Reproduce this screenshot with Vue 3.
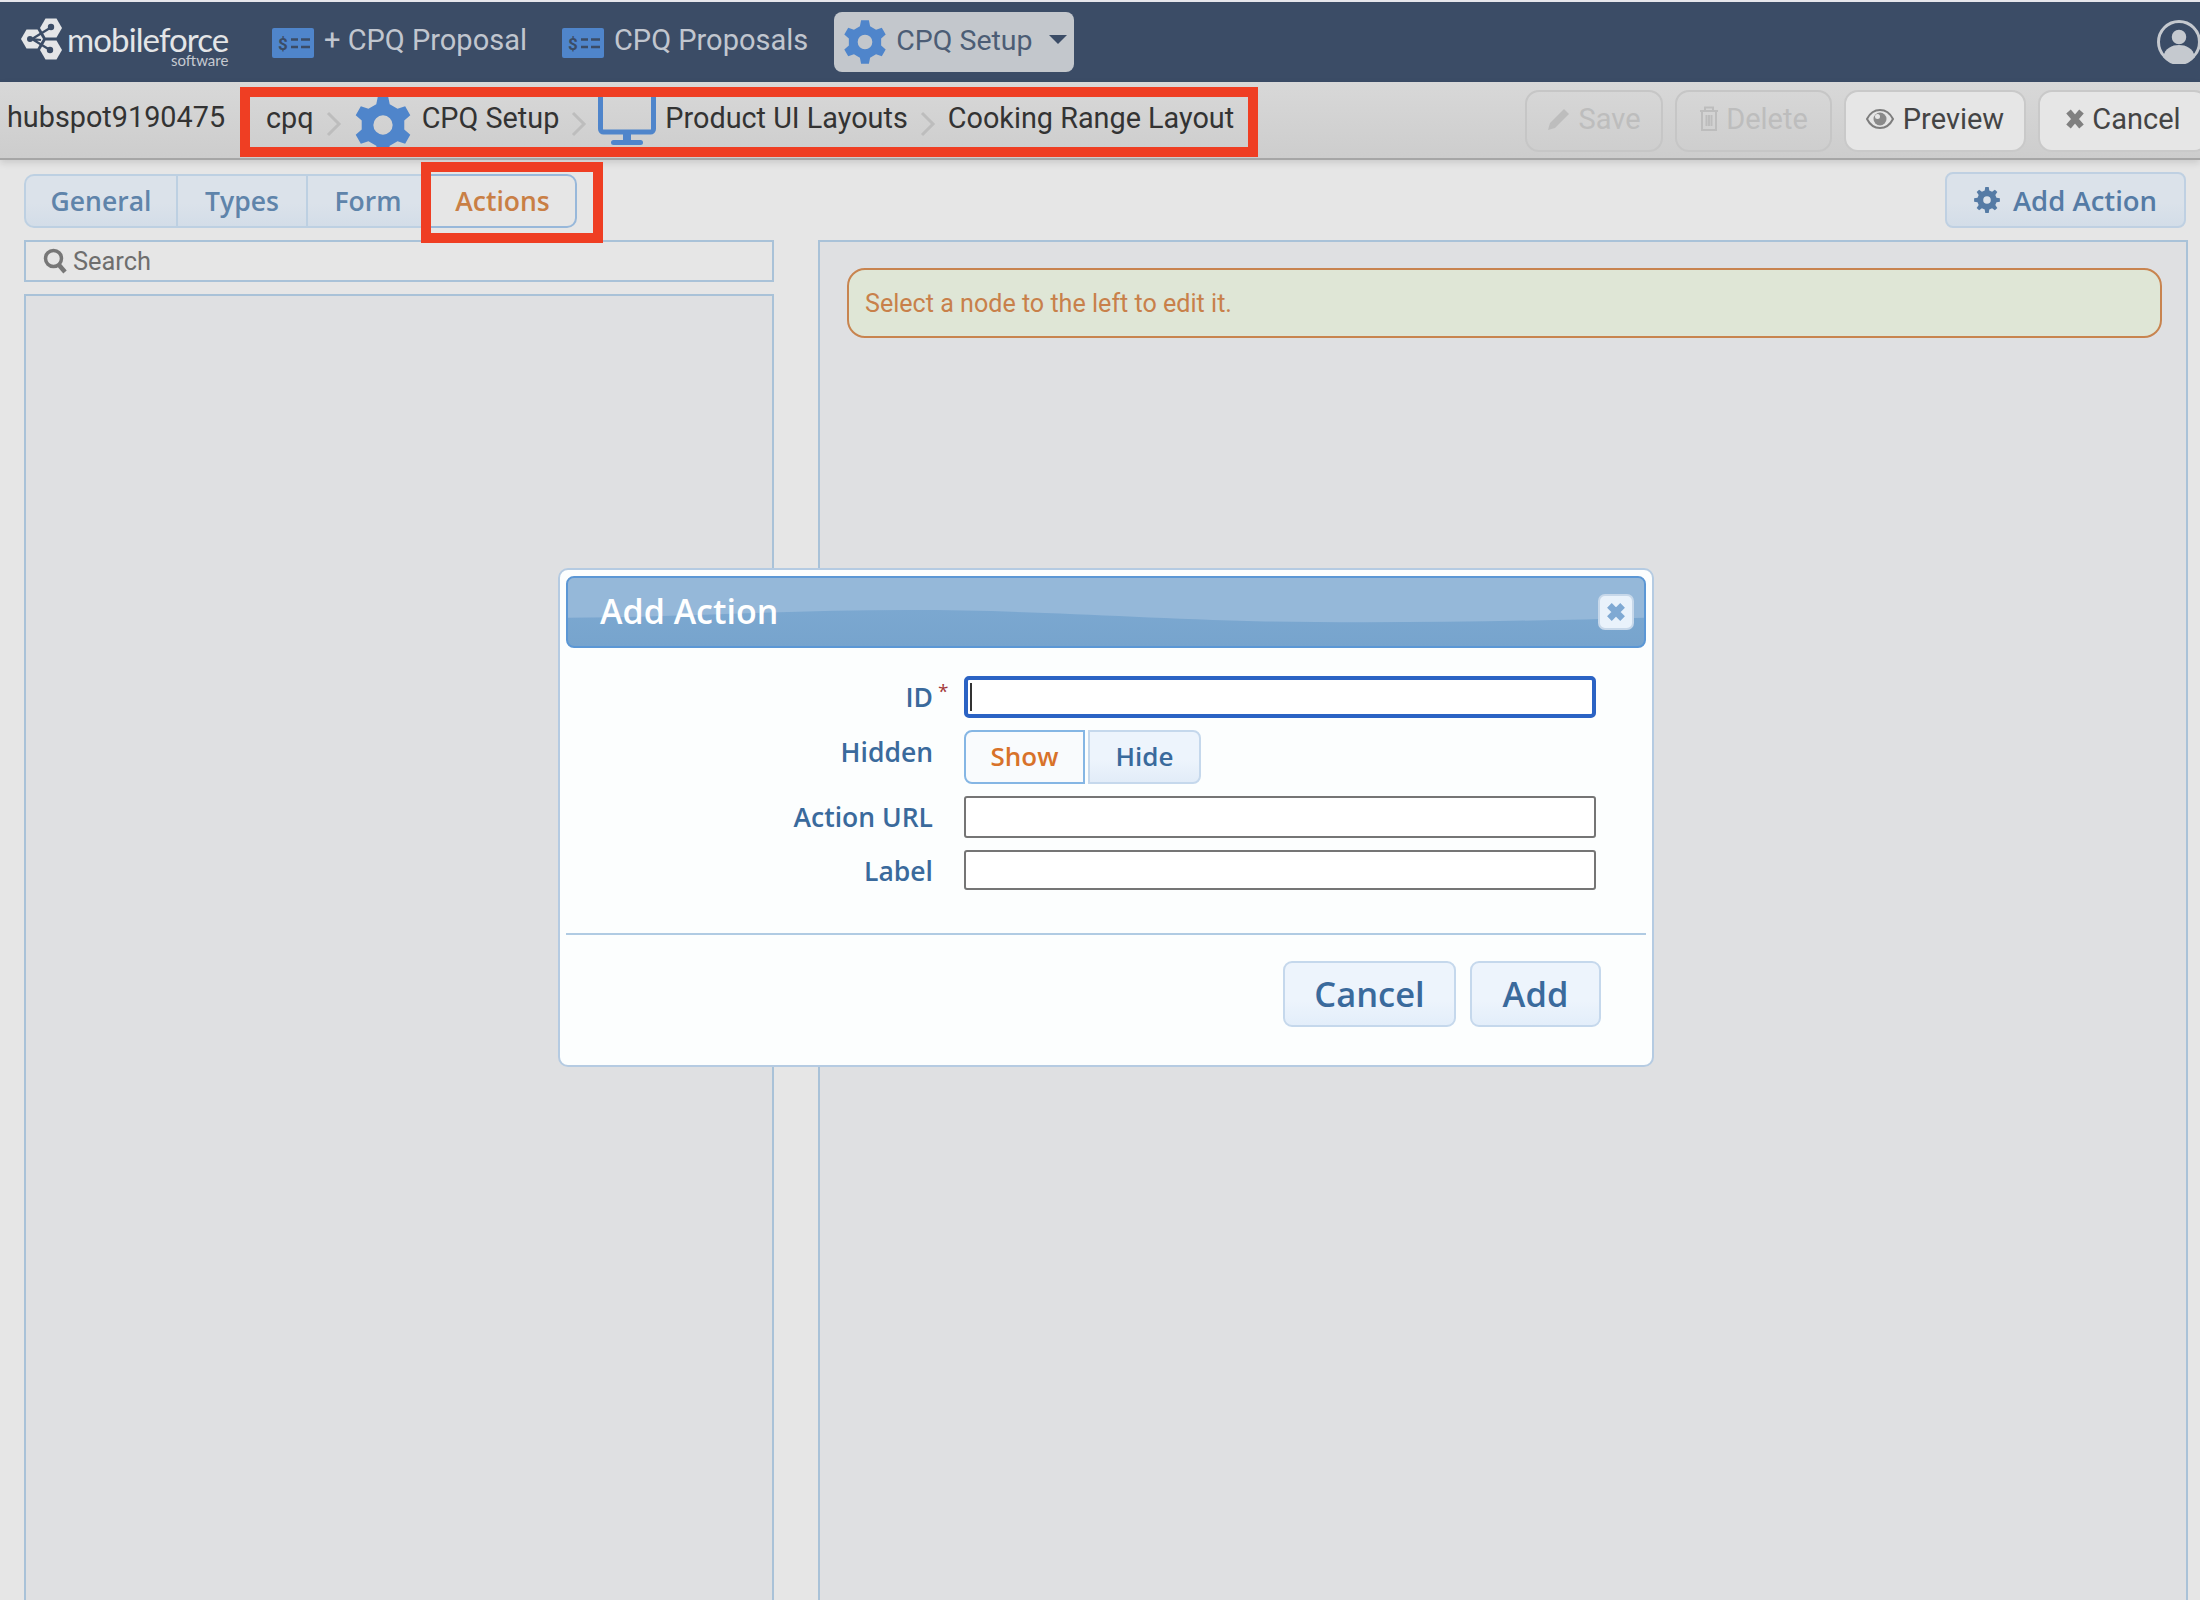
<template>
  <div class="page">
    <header class="navbar">
      <div class="logo">
        <svg class="logo-mark" width="46" height="46" viewBox="0 0 46 46">
          <polygon v-for="h in logoHexes" :key="h" :points="h" fill="#e4e5e7" />
          <path d="M11 22 L29 11 M11 22 L20 23 M11 22 L29 33" stroke="#3b4c66" stroke-width="2.2" fill="none" />
          <circle cx="30" cy="10" r="3.2" fill="#3b4c66" />
          <circle cx="29" cy="33" r="3.2" fill="#3b4c66" />
          <circle cx="9" cy="22" r="3" fill="#3b4c66" />
        </svg>
        <div class="logo-text">
          <span class="logo-name">mobileforce</span>
          <span class="logo-sub">software</span>
        </div>
      </div>
      <a v-for="item in navItems" :key="item" class="nav-item">
        <svg class="money" width="42" height="30" viewBox="0 0 42 30">
          <rect width="42" height="30" rx="2" fill="#4f85cb" />
          <text x="6" y="22" font-size="17" font-weight="700" font-family="Roboto, sans-serif" fill="#3b4c66">$</text>
          <path d="M19 11.5h7M29 11.5h9M19 19h7M29 19h9" stroke="#3b4c66" stroke-width="2.4" />
        </svg>
        {{ item }}
      </a>
      <div class="nav-active">
        <svg width="44" height="44" viewBox="0 0 48 48"><path :d="gearSix" fill="#4f85cb" fill-rule="evenodd" /></svg>
        <span>CPQ Setup</span>
        <i class="caret"></i>
      </div>
      <svg class="avatar" width="44" height="44" viewBox="0 0 44 44">
        <circle cx="22" cy="22" r="20.5" fill="#3b4c66" stroke="#c5c9cf" stroke-width="3" />
        <circle cx="22" cy="17" r="8" fill="#c5c9cf" stroke="#3b4c66" stroke-width="1.5" />
        <path d="M6 37c2-9 9-12 16-12s14 3 16 12a20 20 0 0 1-32 0z" fill="#c5c9cf" />
      </svg>
    </header>

    <div class="toolbar">
      <span class="account">hubspot9190475</span>
      <nav class="crumbs">
        <span class="crumb-first">cpq</span>
        <svg class="chev" width="16" height="26" viewBox="0 0 16 26"><path d="M2 2l11 11L2 24" /></svg>
        <svg class="crumb-gear" width="58" height="58" viewBox="0 0 48 48"><path :d="gearSix" fill="#4f85cb" fill-rule="evenodd" /></svg>
        <span>CPQ Setup</span>
        <svg class="chev" width="16" height="26" viewBox="0 0 16 26"><path d="M2 2l11 11L2 24" /></svg>
        <svg class="crumb-screen" width="58" height="50" viewBox="0 0 58 50">
          <rect x="2.5" y="-3" width="53" height="38" rx="3" fill="none" stroke="#4f85cb" stroke-width="5" />
          <path d="M25 37h8v7h-8z" fill="#4f85cb" />
          <rect x="13" y="43" width="32" height="5" rx="2.5" fill="#4f85cb" />
        </svg>
        <span>Product UI Layouts</span>
        <svg class="chev" width="16" height="26" viewBox="0 0 16 26"><path d="M2 2l11 11L2 24" /></svg>
        <span>Cooking Range Layout</span>
      </nav>
      <div class="tool-buttons">
        <button class="tool off save">
          <svg width="24" height="24" viewBox="0 0 24 24"><path d="M17 2l5 5L8 21l-7 2 2-7z" fill="#bdbdbd" /></svg>
          Save
        </button>
        <button class="tool off del">
          <svg width="20" height="26" viewBox="0 0 20 26"><path d="M6 4V1.500h8V4M1 5h18M3 5v19h14V5M7.500 9v11M10 9v11M12.500 9v11" fill="none" stroke="#bdbdbd" stroke-width="2" /></svg>
          Delete
        </button>
        <button class="tool preview">
          <svg width="28" height="22" viewBox="0 0 28 22">
            <path d="M1 11c3-6 8-9 13-9s10 3 13 9c-3 6-8 9-13 9S4 17 1 11z" fill="#e6e6e6" stroke="#7d7d7d" stroke-width="2" />
            <circle cx="14" cy="11" r="6.500" fill="#8a8a8a" />
            <circle cx="11.500" cy="8.500" r="2.500" fill="#e6e6e6" />
          </svg>
          Preview
        </button>
        <button class="tool cancel">
          <svg width="20" height="22" viewBox="0 0 20 22"><path d="M3.500 3.500l13 15M16.500 3.500l-13 15" stroke="#808080" stroke-width="6" /></svg>
          Cancel
        </button>
      </div>
    </div>

    <main class="content">
      <div class="tabs-row">
        <div class="tabs">
          <button v-for="t in tabs" :key="t" class="tab" :class="{ active: t === 'Actions' }">
            {{ t }}
            <span v-if="t === 'Actions'" class="tab-mark"></span>
          </button>
        </div>
        <button class="add-action">
          <svg width="26" height="26" viewBox="0 0 48 48"><path :d="gearEight" fill="#557ba5" fill-rule="evenodd" /></svg>
          Add Action
        </button>
      </div>
      <div class="columns">
        <div class="left">
          <div class="search">
            <svg width="24" height="26" viewBox="0 0 24 26">
              <circle cx="10.500" cy="10.500" r="8" fill="none" stroke="#777" stroke-width="3.500" />
              <path d="M16 17l6 7" stroke="#777" stroke-width="4.500" />
            </svg>
            <span>Search</span>
          </div>
          <div class="tree"></div>
        </div>
        <div class="right">
          <div class="notice">Select a node to the left to edit it.</div>
        </div>
      </div>
    </main>

    <div class="dialog">
      <div class="dlg-head">
        <svg class="wave" viewBox="0 0 1080 72" preserveAspectRatio="none">
          <path d="M0 0H1080V42C960 46 820 48 700 46C560 42 470 34 340 34C220 34 100 42 0 42Z" fill="#95b8d9" />
        </svg>
        <h2>Add Action</h2>
        <button class="dlg-close">
          <svg width="22" height="22" viewBox="0 0 20 20"><path d="M4 4l12 12M16 4L4 16" stroke="#7fa9d3" stroke-width="6" /></svg>
        </button>
      </div>
      <form class="dlg-form" @submit.prevent>
        <div class="row row-id">
          <label>ID<sup>*</sup></label>
          <div class="focus-input"><i class="cursor"></i></div>
        </div>
        <div class="row row-hidden">
          <label class="up">Hidden</label>
          <div class="toggle">
            <button class="tog on">Show</button>
            <button class="tog">Hide</button>
          </div>
        </div>
        <div class="row row-url">
          <label>Action URL</label>
          <input type="text" />
        </div>
        <div class="row row-label">
          <label>Label</label>
          <input type="text" />
        </div>
      </form>
      <div class="dlg-foot">
        <button class="dlg-btn cancel-btn">Cancel</button>
        <button class="dlg-btn add-btn">Add</button>
      </div>
    </div>
  </div>
</template>

<script setup>
const navItems = ["+ CPQ Proposal", "CPQ Proposals"];
const tabs = ["General", "Types", "Form", "Actions"];

function hex(cx, cy, r) {
  const pts = [];
  for (let i = 0; i < 6; i++) {
    const a = (Math.PI / 3) * i;
    pts.push(`${(cx + r * Math.cos(a)).toFixed(1)},${(cy + r * Math.sin(a)).toFixed(1)}`);
  }
  return pts.join(" ");
}
const logoHexes = [hex(30, 11, 11), hex(11, 22, 11), hex(30, 33, 11)];

// cog outline in a 48 box, with a round hole
function gear(teeth, outer, inner, hole, rot = 0) {
  const step = (Math.PI * 2) / teeth;
  let d = "";
  for (let i = 0; i < teeth; i++) {
    const a = i * step + rot;
    const p = [
      [inner, a - step * 0.3],
      [outer, a - step * 0.17],
      [outer, a + step * 0.17],
      [inner, a + step * 0.3],
    ];
    p.forEach(([r, t], j) => {
      const x = (24 + r * Math.sin(t)).toFixed(2);
      const y = (24 - r * Math.cos(t)).toFixed(2);
      d += `${i === 0 && j === 0 ? "M" : "L"}${x} ${y} `;
    });
  }
  d += `Z M${24 - hole} 24 a${hole} ${hole} 0 1 0 ${hole * 2} 0 a${hole} ${hole} 0 1 0 ${-hole * 2} 0 Z`;
  return d;
}
const gearSix = gear(6, 24, 18, 8);
const gearEight = gear(8, 24, 18, 7);
</script>

<style>
html,
body {
  margin: 0;
  background: #e6e6e6;
}
</style>

<style scoped>
.page {
  width: 2200px;
  height: 1600px;
  overflow: hidden;
  position: relative;
  display: flex;
  flex-direction: column;
  background: #e6e6e6;
  font-family: Roboto, "Liberation Sans", sans-serif;
  border-top: 2px solid #e6e6ec;
  box-sizing: border-box;
}
button {
  font-family: inherit;
  cursor: pointer;
}

/* top bar */
.navbar {
  height: 80px;
  flex: none;
  display: flex;
  align-items: center;
  background: #3b4c66;
  color: #c1c6cf;
  font-size: 29px;
  padding-left: 21px;
  box-sizing: border-box;
}
.logo {
  display: flex;
  align-items: flex-start;
  width: 207px;
  margin-right: 44px;
}
.logo-mark {
  flex: none;
  margin-top: -1px;
}
.logo-text {
  display: flex;
  flex-direction: column;
  align-items: flex-end;
  margin-left: 0;
  color: #e4e5e7;
}
.logo-name {
  font-family: Lato, sans-serif;
  font-size: 33px;
  line-height: 28px;
  letter-spacing: -0.9px;
  margin-top: 7px;
}
.logo-sub {
  font-family: Lato, sans-serif;
  font-size: 15px;
  line-height: 14px;
  color: #c6cad1;
}
.nav-item {
  display: flex;
  align-items: center;
  gap: 10px;
  margin-right: 35px;
  white-space: nowrap;
  position: relative;
  top: -2px;
}
.nav-item:nth-of-type(2) {
  margin-right: 26px;
}
.money {
  flex: none;
  position: relative;
  top: 3px;
}
.nav-active {
  width: 240px;
  height: 60px;
  box-sizing: border-box;
  padding-left: 9px;
  display: flex;
  align-items: center;
  gap: 9px;
  background: #c3c7cc;
  border-radius: 8px;
  color: #4c5d75;
  font-size: 28.500px;
  white-space: nowrap;
}
.nav-active svg {
  flex: none;
}
.nav-active span {
  position: relative;
  top: -2px;
}
.caret {
  width: 0;
  height: 0;
  flex: none;
  border-left: 9px solid transparent;
  border-right: 9px solid transparent;
  border-top: 9px solid #3b4c66;
  margin-left: 7px;
  margin-top: -5px;
}
.avatar {
  margin-left: auto;
  margin-right: -1px;
  flex: none;
}

/* second bar */
.toolbar {
  height: 78px;
  flex: none;
  display: flex;
  align-items: flex-start;
  box-sizing: border-box;
  background: linear-gradient(#d8d8d8, #cdcdcd);
  border-bottom: 2px solid #a6a6a6;
  box-shadow: 0 3px 7px rgba(0, 0, 0, 0.12);
  position: relative;
  font-size: 29px;
  color: #333;
}
.account {
  margin-left: 7px;
  margin-top: 18px;
  width: 233px;
  flex: none;
  font-size: 28.800px;
}
.crumbs {
  margin-top: 5px;
  height: 70px;
  width: 1018px;
  flex: none;
  box-sizing: border-box;
  border: 10px solid #ef3e23;
  overflow: hidden;
  display: flex;
  align-items: center;
  padding-left: 16px;
  white-space: nowrap;
  font-size: 28.800px;
}
.crumbs span {
  position: relative;
  top: -4px;
}
.chev {
  flex: none;
  margin: 4px 12px 0 12px;
}
.chev path {
  fill: none;
  stroke: #bdbdbd;
  stroke-width: 3;
}
.crumb-gear {
  flex: none;
  margin: 6px 10px 0 0;
}
.crumb-screen {
  flex: none;
  margin: 0 9px 0 -1px;
  align-self: flex-start;
}
.tool-buttons {
  margin-left: 267px;
  margin-top: 8px;
  display: flex;
  gap: 12px;
}
.tool {
  height: 62px;
  box-sizing: border-box;
  border: 2px solid #c9c9c9;
  border-radius: 14px;
  background: #e6e6e6;
  color: #444;
  font-size: 29px;
  display: flex;
  align-items: center;
  justify-content: center;
  gap: 7px;
  padding: 0 0 4px;
  flex: none;
}
.tool.off {
  background: transparent;
  color: #bdbdbd;
  border-color: #c6c6c6;
}
.save {
  width: 138px;
}
.del {
  width: 157px;
}
.preview {
  width: 182px;
  gap: 9px;
}
.cancel {
  width: 170px;
}

/* content */
.content {
  flex: 1;
  display: flex;
  flex-direction: column;
  padding: 12px 12px 0 24px;
  min-height: 0;
}
.tabs-row {
  display: flex;
  justify-content: space-between;
  align-items: flex-start;
  height: 68px;
  flex: none;
}
.tabs {
  display: flex;
  margin-top: 2px;
}
.tab {
  height: 54px;
  box-sizing: border-box;
  border: 2px solid #bdd0e2;
  border-right: none;
  background: linear-gradient(#dbe2ea 55%, #d3dde8);
  color: #5f84aa;
  font-family: "Open Sans", sans-serif;
  font-weight: 600;
  font-size: 26.500px;
  padding: 0;
  position: relative;
}
.tab:nth-child(1) {
  width: 152px;
  border-radius: 10px 0 0 10px;
}
.tab:nth-child(2) {
  width: 130px;
}
.tab:nth-child(3) {
  width: 122px;
}
.tab.active {
  width: 149px;
  background: #e6e6e6;
  color: #c97f45;
  border: 2px solid #98b8da;
  border-radius: 0 10px 10px 0;
}
.tab-mark {
  position: absolute;
  left: -9px;
  top: -14px;
  width: 182px;
  height: 81px;
  box-sizing: border-box;
  border: 10px solid #ef3e23;
}
.add-action {
  width: 241px;
  height: 56px;
  box-sizing: border-box;
  border: 2px solid #bfd0e2;
  border-radius: 8px;
  background: linear-gradient(#dbe2ea 55%, #d3dde8);
  color: #557ba5;
  font-family: "Open Sans", sans-serif;
  font-weight: 600;
  font-size: 27.500px;
  display: flex;
  align-items: center;
  justify-content: center;
  gap: 13px;
  padding: 0;
  margin-right: 2px;
}
.columns {
  flex: 1;
  display: flex;
  gap: 44px;
  min-height: 0;
}
.left {
  width: 750px;
  flex: none;
  display: flex;
  flex-direction: column;
  gap: 12px;
}
.search {
  height: 42px;
  flex: none;
  box-sizing: border-box;
  border: 2px solid #a9c2d8;
  display: flex;
  align-items: center;
  gap: 6px;
  padding-left: 17px;
  color: #6e6e6e;
  font-size: 25.400px;
}
.tree {
  flex: 1;
  border: 2px solid #a9c2d8;
  border-bottom: none;
  background: #dfe0e2;
}
.right {
  flex: 1;
  box-sizing: border-box;
  border: 2px solid #a9c2d8;
  border-bottom: none;
  background: #dfe0e2;
  padding: 26px 24px 0 27px;
}
.notice {
  height: 70px;
  box-sizing: border-box;
  border: 2px solid #c8844f;
  border-radius: 18px;
  background: #dfe6d6;
  color: #c8804a;
  font-size: 25.100px;
  display: flex;
  align-items: center;
  padding-left: 16px;
}

/* dialog */
.dialog {
  position: absolute;
  left: 558px;
  top: 566px;
  width: 1096px;
  height: 499px;
  box-sizing: border-box;
  background: #fcfefe;
  border: 2px solid #b5cbe2;
  border-radius: 10px;
  padding: 6px 6px 0;
  font-family: "Open Sans", sans-serif;
}
.dlg-head {
  height: 72px;
  box-sizing: border-box;
  border: 2px solid #5b97d5;
  border-radius: 8px;
  background: linear-gradient(#7fabd3, #77a4cd);
  position: relative;
  overflow: hidden;
  display: flex;
  align-items: center;
  padding-left: 32px;
}
.wave {
  position: absolute;
  inset: 0;
  width: 100%;
  height: 100%;
}
.dlg-head h2 {
  position: relative;
  top: -1px;
  margin: 0;
  color: #fff;
  font-size: 34px;
  font-weight: 600;
}
.dlg-close {
  position: absolute;
  right: 10px;
  top: 16px;
  width: 36px;
  height: 36px;
  box-sizing: border-box;
  border: 2px solid #c7d8ea;
  border-radius: 7px;
  background: #e9f2fb;
  padding: 0;
  display: flex;
  align-items: center;
  justify-content: center;
}
.dlg-form {
  height: 287px;
  box-sizing: border-box;
  padding-top: 28px;
  border-bottom: 2px solid #b0cbe3;
}
.row {
  display: flex;
  align-items: center;
  margin-bottom: 12px;
}
.row label {
  width: 367px;
  flex: none;
  text-align: right;
  margin-right: 31px;
  color: #3a6a9c;
  font-size: 26.500px;
  font-weight: 600;
  position: relative;
}
.row sup {
  position: absolute;
  left: 372px;
  top: -3px;
  font-size: 19px;
  font-weight: 400;
  color: #a33a3a;
  line-height: 30px;
}
.row label.up {
  position: relative;
  top: -5px;
}
.row-label label {
  top: 1px;
}
.focus-input,
.row input {
  width: 632px;
  box-sizing: border-box;
  background: #fff;
}
.focus-input {
  height: 42px;
  border: 4px solid #2b63c4;
  border-radius: 5px;
  padding: 3px 2px;
}
.cursor {
  display: block;
  width: 2px;
  height: 28px;
  background: #333;
}
.row input {
  height: 42px;
  border: 2px solid #757575;
  border-radius: 3px;
  outline: none;
  padding: 0;
}
.row-label input {
  height: 40px;
}
.row-id {
  height: 42px;
}
.toggle {
  display: flex;
  gap: 3px;
}
.tog {
  height: 54px;
  width: 113px;
  box-sizing: border-box;
  border: 2px solid #c5d8ec;
  border-radius: 0 8px 8px 0;
  background: linear-gradient(#edf4fc 55%, #e2ecf8);
  color: #3a6a9c;
  font-family: "Open Sans", sans-serif;
  font-size: 26px;
  font-weight: 600;
  padding: 0 0 2px;
}
.tog.on {
  width: 121px;
  border-color: #85b6e4;
  border-radius: 8px 0 0 8px;
  background: #f9fbfd;
  color: #d8722a;
}
.dlg-foot {
  display: flex;
  justify-content: flex-end;
  gap: 14px;
  padding: 26px 45px 0 0;
}
.dlg-btn {
  height: 66px;
  box-sizing: border-box;
  border: 2px solid #c5d8ec;
  border-radius: 9px;
  background: linear-gradient(#edf4fc 60%, #e3eefa);
  color: #3a6a9c;
  font-family: "Open Sans", sans-serif;
  font-size: 34.500px;
  font-weight: 600;
  padding: 0 0 2px;
}
.cancel-btn {
  width: 173px;
}
.add-btn {
  width: 131px;
}
</style>
